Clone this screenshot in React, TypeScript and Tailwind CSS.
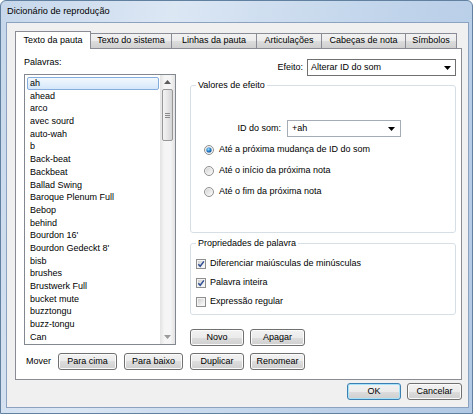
import React from "react";

const words = [
  "ah",
  "ahead",
  "arco",
  "avec sourd",
  "auto-wah",
  "b",
  "Back-beat",
  "Backbeat",
  "Ballad Swing",
  "Baroque Plenum Full",
  "Bebop",
  "behind",
  "Bourdon 16'",
  "Bourdon Gedeckt 8'",
  "bisb",
  "brushes",
  "Brustwerk Full",
  "bucket mute",
  "buzztongu",
  "buzz-tongu",
  "Can",
];

const tabs = [
  { label: "Texto da pauta", w: "w-[76px]" },
  { label: "Texto do sistema", w: "w-[81px]" },
  { label: "Linhas da pauta", w: "w-[85px]" },
  { label: "Articulações", w: "w-[65px]" },
  { label: "Cabeças de nota", w: "w-[84px]" },
  { label: "Símbolos", w: "w-[51px]" },
];

function Btn({ label, w, primary }: { label: string; w: string; primary?: boolean }) {
  return (
    <div
      className={`${w} h-[17px] shrink-0 flex items-center justify-center rounded-[3px] border ${
        primary
          ? "border-[#3c7fb1] shadow-[inset_0_0_0_1px_#a6e2fa]"
          : "border-[#707070] shadow-[inset_0_0_0_1px_#fbfbfb]"
      } bg-[linear-gradient(#f2f2f2,#ebebeb_50%,#dddddd_50%,#cfcfcf)]`}
    >
      {label}
    </div>
  );
}

function Arrow({ color = "#000" }: { color?: string }) {
  return (
    <svg width="7" height="4" viewBox="0 0 7 4">
      <path d="M0 0h7L3.5 4z" fill={color} />
    </svg>
  );
}

function Radio({ on }: { on?: boolean }) {
  return (
    <svg width="10" height="10" viewBox="0 0 10 10" className="shrink-0">
      <defs>
        <linearGradient id="rbg" x1="0" y1="0" x2="1" y2="1">
          <stop offset="0" stopColor="#d4d4d4" />
          <stop offset="1" stopColor="#fafafa" />
        </linearGradient>
        <radialGradient id="rdot" cx="0.4" cy="0.35" r="0.7">
          <stop offset="0" stopColor="#a6e0ff" />
          <stop offset="0.5" stopColor="#2a8ad4" />
          <stop offset="1" stopColor="#0f4d8f" />
        </radialGradient>
      </defs>
      <circle cx="5" cy="5" r="4.5" fill="#f4f4f4" stroke="#8e8f8f" />
      <circle cx="5" cy="5" r="3.3" fill="url(#rbg)" />
      {on && <circle cx="5" cy="5" r="2.6" fill="url(#rdot)" />}
    </svg>
  );
}

function Check({ on }: { on?: boolean }) {
  return (
    <svg width="10" height="10" viewBox="0 0 10 10" className="shrink-0">
      <defs>
        <linearGradient id="cbg" x1="0" y1="0" x2="1" y2="1">
          <stop offset="0" stopColor="#d0d0d0" />
          <stop offset="1" stopColor="#fbfbfb" />
        </linearGradient>
      </defs>
      <rect x="0.5" y="0.5" width="9" height="9" fill="#f4f4f4" stroke="#8e8f8f" />
      <rect x="2" y="2" width="6" height="6" fill="url(#cbg)" />
      {on && <path d="M2.3 5.2L4.2 7.3L7.9 2.4" fill="none" stroke="#2f4f94" strokeWidth="1.5" />}
    </svg>
  );
}

export default function App() {
  return (
    <div className="w-[473px] h-[414px] flex flex-col rounded-t-[6px] border border-[#62809f] bg-[linear-gradient(105deg,#c6d7eb_0%,#dce7f4_30%,#d0dff0_45%,#bfd3ea_70%,#b2c9e5_100%)] pl-[5px] pr-[3px] pb-[5px] text-[9px] text-black font-['Liberation_Sans',Arial,sans-serif] overflow-hidden">
      <div className="h-[21px] shrink-0 flex items-center pl-[1px] text-[9.2px]">Dicionário de reprodução</div>
      <div className="flex-1 flex flex-col border border-[#8ba3c1] bg-[#f0f0f0] pt-[8px] pl-[8px] pr-[6px]">
        <div className="flex items-end h-[17px]">
          {tabs.map((t, i) =>
            i === 0 ? (
              <div
                key={t.label}
                className={`${t.w} h-[18px] -mb-[1px] relative z-10 flex items-center justify-center border border-b-0 border-[#898c95] bg-white`}
              >
                {t.label}
              </div>
            ) : (
              <div
                key={t.label}
                className={`${t.w} h-[15px] flex items-center justify-center border border-b-0 border-l-0 border-[#898c95] bg-[linear-gradient(#f2f2f2,#ebebeb_50%,#dddddd_50%,#cfcfcf)]`}
              >
                {t.label}
              </div>
            )
          )}
        </div>
        <div className="h-[332px] flex flex-col border border-[#898c95] bg-white">
          <div className="flex pl-[8px] pt-[7px]">
            <div className="w-[152px] flex flex-col">
              <div className="h-[12px] leading-[12px]">Palavras:</div>
              <div className="mt-[6px] h-[271px] flex border border-[#828790] bg-white">
                <div className="flex-1 pt-[2px] pl-[2px] pr-[1px] overflow-hidden">
                  {words.map((w, i) => (
                    <div
                      key={w}
                      className={`h-[12.7px] leading-[11px] pl-[2px] whitespace-nowrap ${
                        i === 0
                          ? "rounded-[2px] border border-[#84acdd] bg-[linear-gradient(#f2f8fd,#d5e7fa)]"
                          : "border border-transparent"
                      }`}
                    >
                      {w}
                    </div>
                  ))}
                </div>
                <div className="w-[15px] flex flex-col bg-[linear-gradient(90deg,#e3e3e3,#f5f5f5_30%,#f5f5f5_70%,#e3e3e3)]">
                  <div className="h-[14px] flex items-center justify-center">
                    <svg width="7" height="4" viewBox="0 0 7 4">
                      <path d="M0 4h7L3.5 0z" fill="#5c5c5c" />
                    </svg>
                  </div>
                  <div className="flex-1">
                    <div className="mx-[2px] h-[52px] flex flex-col items-center justify-center gap-[1px] rounded-[2px] border border-[#979797] bg-[linear-gradient(90deg,#f4f4f4,#e6e6e6_50%,#d4d4d4)]">
                      <div className="w-[5px] h-px bg-[#8a8a8a]" />
                      <div className="w-[5px] h-px bg-[#8a8a8a]" />
                      <div className="w-[5px] h-px bg-[#8a8a8a]" />
                    </div>
                  </div>
                  <div className="h-[14px] flex items-center justify-center">
                    <Arrow color="#9a9a9a" />
                  </div>
                </div>
              </div>
            </div>
            <div className="ml-[14px] w-[266px] flex flex-col">
              <div className="mt-[3px] h-[17px] flex items-center justify-end">
                <span>Efeito:</span>
                <div className="ml-[4px] w-[149px] h-[17px] flex items-center justify-between border border-[#707070] bg-white pl-[3px] pr-[4px]">
                  <span>Alterar ID do som</span>
                  <Arrow />
                </div>
              </div>
              <fieldset className="mt-[3px] h-[154px] border border-[#d5dfe5] rounded-[3px]">
                <legend className="ml-[5px] px-[2px] h-[12px] leading-[12px]">Valores de efeito</legend>
                <div className="pt-[29px] flex items-center h-[46px]">
                  <div className="w-[90px] text-right">ID do som:</div>
                  <div className="ml-[6px] w-[114px] h-[17px] flex items-center justify-between border border-[#a5acb5] bg-white pl-[4px] pr-[5px]">
                    <span>+ah</span>
                    <Arrow />
                  </div>
                </div>
                <div className="mt-[6px] pl-[13px] flex flex-col gap-[8px]">
                  <div className="h-[13px] flex items-center">
                    <Radio on />
                    <span className="ml-[5px]">Até a próxima mudança de ID do som</span>
                  </div>
                  <div className="h-[13px] flex items-center">
                    <Radio />
                    <span className="ml-[5px]">Até o início da próxima nota</span>
                  </div>
                  <div className="h-[13px] flex items-center">
                    <Radio />
                    <span className="ml-[5px]">Até o fim da próxima nota</span>
                  </div>
                </div>
              </fieldset>
              <fieldset className="mt-[4px] h-[78px] border border-[#d5dfe5] rounded-[3px]">
                <legend className="ml-[5px] px-[2px] h-[12px] leading-[12px]">Propriedades de palavra</legend>
                <div className="pt-[8px] pl-[5px] flex flex-col gap-[6px]">
                  <div className="h-[13px] flex items-center">
                    <Check on />
                    <span className="ml-[4px]">Diferenciar maiúsculas de minúsculas</span>
                  </div>
                  <div className="h-[13px] flex items-center">
                    <Check on />
                    <span className="ml-[4px]">Palavra inteira</span>
                  </div>
                  <div className="h-[13px] flex items-center">
                    <Check />
                    <span className="ml-[4px]">Expressão regular</span>
                  </div>
                </div>
              </fieldset>
              <div className="mt-[14px] flex gap-[6px]">
                <Btn label="Novo" w="w-[54px]" />
                <Btn label="Apagar" w="w-[55px]" />
              </div>
            </div>
          </div>
          <div className="mt-[7px] pl-[10px] h-[17px] flex items-center">
            <span className="w-[32px]">Mover</span>
            <Btn label="Para cima" w="w-[59px]" />
            <div className="ml-[7px]">
              <Btn label="Para baixo" w="w-[59px]" />
            </div>
            <div className="ml-[7px]">
              <Btn label="Duplicar" w="w-[54px]" />
            </div>
            <div className="ml-[6px]">
              <Btn label="Renomear" w="w-[55px]" />
            </div>
          </div>
        </div>
        <div className="mt-[3px] flex justify-end gap-[6px]">
          <Btn label="OK" w="w-[54px]" primary />
          <Btn label="Cancelar" w="w-[55px]" />
        </div>
      </div>
    </div>
  );
}
